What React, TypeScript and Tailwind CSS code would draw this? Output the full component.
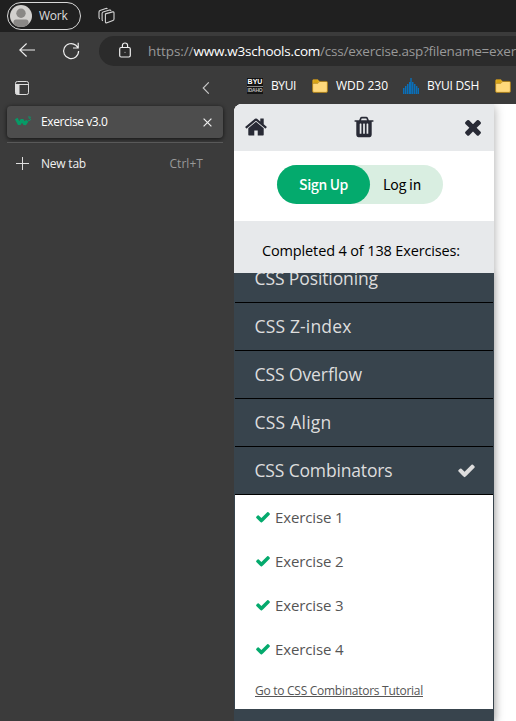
import { useLayoutEffect, useRef, useState } from "react";

const UI = "font-['Open_Sans','Noto_Sans',sans-serif]";

/** One line of text, tracked so that it fills the given width. */
function Fit({ w, className = "", children }: { w: number; className?: string; children: string }) {
  const ref = useRef<HTMLSpanElement>(null);
  const [tracking, setTracking] = useState(0);
  useLayoutEffect(() => {
    const el = ref.current;
    if (el) setTracking((w - el.getBoundingClientRect().width) / children.length);
  }, [w, children]);
  return (
    <span ref={ref} className={"inline-block shrink-0 whitespace-pre " + className} style={{ letterSpacing: tracking }}>
      {children}
    </span>
  );
}

const PATHS = {
  home: "M1472 992v480q0 26-19 45t-45 19h-384v-384h-256v384h-384q-26 0-45-19t-19-45v-480q0-1 .5-3t.5-3l575-474 575 474q1 2 1 6zm223-69l-62 74q-8 9-21 11h-3q-13 0-21-7l-692-577-692 577q-12 8-24 7-13-2-21-11l-62-74q-8-10-7-23.5t11-21.5l719-599q32-26 76-26t76 26l244 204v-195q0-14 9-23t23-9h192q14 0 23 9t9 23v408l219 182q10 8 11 21.5t-7 23.5z",
  trash: "M704 1376v-704q0-14-9-23t-23-9h-64q-14 0-23 9t-9 23v704q0 14 9 23t23 9h64q14 0 23-9t9-23zm256 0v-704q0-14-9-23t-23-9h-64q-14 0-23 9t-9 23v704q0 14 9 23t23 9h64q14 0 23-9t9-23zm256 0v-704q0-14-9-23t-23-9h-64q-14 0-23 9t-9 23v704q0 14 9 23t23 9h64q14 0 23-9t9-23zm-544-992h448l-48-117q-7-9-17-11h-317q-10 2-17 11zm928 32v64q0 14-9 23t-23 9h-96v948q0 83-47 143.500t-113 60.500h-832q-66 0-113-58.500t-47-141.500v-952h-96q-14 0-23-9t-9-23v-64q0-14 9-23t23-9h309l70-167q15-37 54-63t79-26h320q40 0 79 26t54 63l70 167h309q14 0 23 9t9 23z",
  close: "M1490 1322q0 40-28 68l-136 136q-28 28-68 28t-68-28l-294-294-294 294q-28 28-68 28t-68-28l-136-136q-28-28-28-68t28-68l294-294-294-294q-28-28-28-68t28-68l136-136q28-28 68-28t68 28l294 294 294-294q28-28 68-28t68 28l136 136q28 28 28 68t-28 68l-294 294 294 294q28 28 28 68z",
  check: "M1671 566q0 40-28 68l-724 724-136 136q-28 28-68 28t-68-28l-136-136-362-362q-28-28-28-68t28-68l136-136q28-28 68-28t68 28l294 295 656-657q28-28 68-28t68 28l136 136q28 28 28 68z",
};

function Glyph({ name, className }: { name: keyof typeof PATHS; className: string }) {
  return (
    <svg viewBox="0 0 1792 1792" fill="currentColor" className={"shrink-0 " + className}>
      <path d={PATHS[name]} />
    </svg>
  );
}

function Folder({ className = "" }: { className?: string }) {
  return (
    <svg viewBox="0 0 16 14" className={"h-3.5 w-4 shrink-0 " + className}>
      <path d="M.6 12.2V1.8Q.6.6 1.8.6h4L7.6 2.4h6.6q1.2 0 1.2 1.2v8.600q0 1.200-1.200 1.200H1.800Q.6 13.400.6 12.200z" fill="#ffd97b" stroke="#a77d1d" />
      <path d="M1.100 1.800q0-.7.7-.7h3.800L7 2.600 5.600 4H1.100z" fill="#d9a514" />
      <path d="M1 4.400h4.800L7.700 2.500" fill="none" stroke="#b98b20" strokeWidth=".8" />
    </svg>
  );
}

function TitleBar() {
  return (
    <div className="flex h-8 shrink-0 items-start bg-[#202020] pl-[7px] pt-0.5">
      <div className="flex h-7 w-[74px] items-center rounded-full border border-[#d8d8d8] pl-[2px]">
        <svg viewBox="0 0 22 22" className="size-[22px] shrink-0">
          <clipPath id="face"><circle cx="11" cy="11" r="11" /></clipPath>
          <g clipPath="url(#face)">
            <rect width="22" height="22" fill="#d2d0ce" />
            <circle cx="11" cy="8.300" r="4.700" fill="#8a8886" />
            <path d="M3.500 22v-5q0-2.500 2.500-2.500h10q2.500 0 2.500 2.500v5z" fill="#8a8886" />
          </g>
        </svg>
        <Fit w={28.5} className="ml-[7px] text-[12px] font-medium leading-4 text-[#ddd]">Work</Fit>
      </div>
      <svg viewBox="0 0 18 18" className="ml-[17px] mt-[5px] size-[18px]" fill="none" stroke="#d4d4d4" strokeWidth="1.100" strokeLinejoin="round">
        <path d="M7.400 6.900 14.600 4.900q1.400-.3 1.400 1v6q0 1.200-1.100 1.600L9 15.800q-1.600.4-1.600-1.100z" />
        <path d="M4.900 13.600q-.8-.2-.8-1.200V6.500q0-1 1-1.400l6.400-2q1.200-.3 1.500.8" />
        <path d="M2 11.700q-1-.2-1-1.400V5q0-1.200 1-1.600l5.800-1.900q1.200-.3 1.500.6" />
      </svg>
    </div>
  );
}

function Toolbar() {
  return (
    <div className="flex h-9 shrink-0 items-center overflow-hidden">
      <svg viewBox="0 0 16 14" className="ml-[19px] h-3.5 w-4 shrink-0" fill="none" stroke="#eee" strokeWidth="1.100">
        <path d="M16 7H.8M7.600.5.8 7l6.800 6.500" />
      </svg>
      <svg viewBox="0 0 18 18" className="ml-[27px] mt-[1px] size-[18px] shrink-0" fill="none" stroke="#eee" strokeWidth="1.200">
        <path d="M16.600 9a7.500 7.500 0 1 1-2.700-5.700L16 5.700M16.200.8v5.200h-5.200" />
      </svg>
      <div className="ml-[19px] mt-[2px] flex h-[30px] w-[417px] shrink-0 items-center rounded-l-full bg-[#2b2b2b] pl-5">
        <svg viewBox="0 0 12 16" className="mb-[2px] h-4 w-3 shrink-0" fill="none" stroke="#eee" strokeWidth="1.200">
          <rect x=".7" y="5.500" width="10.600" height="9.500" rx="1.400" />
          <path d="M3.400 5.500V3.600a2.600 2.600 0 0 1 5.200 0v1.900" />
          <circle cx="6" cy="10.300" r=".5" fill="#eee" stroke="none" />
        </svg>
        <div className="ml-[17px] flex text-[13.500px] leading-5 text-[#999]">
          <Fit w={45.5}>https://</Fit>
          <Fit w={126.5} className="text-white">www.w3schools.com</Fit>
          <Fit w={196}>/css/exercise.asp?filename=exer</Fit>
        </div>
      </div>
    </div>
  );
}

function Sidebar() {
  return (
    <aside className="flex w-[234px] shrink-0 flex-col pl-[7px] pr-[11px] text-[12px]">
      <div className="flex h-[38px] items-center justify-between pl-2 pr-[13px] pt-[2px]">
        <svg viewBox="0 0 14 14" className="size-3.5" fill="none" stroke="#ddd" strokeWidth="1">
          <rect x=".5" y=".5" width="13" height="13" rx="1.800" />
          <path d="M1 3.500h12.500" />
          <path d="M1 3.500h3v9.500H2q-1 0-1-1z" fill="#ddd" />
        </svg>
        <svg viewBox="0 0 8 12" className="h-3 w-2" fill="none" stroke="#c8c8c8" strokeWidth="1.100">
          <path d="M6.800.3 1.200 6l5.600 5.700" />
        </svg>
      </div>
      <div className="flex h-8 items-center rounded-[4px] bg-[#4d4d4d] pl-2 pr-[11px] shadow-[0_1px_4px_rgba(0,0,0,0.7)]">
        <svg viewBox="0 0 17 12" className="h-3 w-[17px] shrink-0" fill="none" stroke="#069a66">
          <path d="M1.200 2.500 4.300 8.300 7 3.800 9.700 8.300 12.200 4.600" strokeWidth="3" strokeLinejoin="bevel" />
          <path d="M13 1h2.500L14.300 2.500q1.500.1 1.300 1.300-.4 1.200-2.600.6" strokeWidth=".9" />
        </svg>
        <Fit w={66.5} className="ml-[9px] text-white">Exercise v3.0</Fit>
        <svg viewBox="0 0 9 9" className="ml-auto size-[9px]" stroke="#eee" strokeWidth="1.200">
          <path d="m.6.6 7.800 7.800M8.400.6.6 8.400" />
        </svg>
      </div>
      <div className="mt-1 h-px bg-[#595959]" />
      <div className="flex h-[41px] items-center pl-[9px] pr-[20px]">
        <svg viewBox="0 0 13 13" className="size-[13px]" stroke="#ddd" strokeWidth="1">
          <path d="M6.500 0v13M0 6.500h13" />
        </svg>
        <Fit w={45} className="ml-3 text-[#f0f0f0]">New tab</Fit>
        <Fit w={33.500} className="ml-auto text-[#999]">Ctrl+T</Fit>
      </div>
    </aside>
  );
}

function Bookmarks() {
  return (
    <div className="flex h-9 shrink-0 items-center overflow-hidden pl-[13px] text-[12px] text-white">
      <div className="flex h-4 w-4 shrink-0 flex-col items-center overflow-hidden bg-[#151515]">
        <Fit w={15} className="h-[8px] font-['Liberation_Sans',sans-serif] text-[7px] font-bold leading-[8px]">BYU</Fit>
        <div className="h-px w-full bg-[#888]" />
        <Fit w={15} className="h-[7px] font-['Liberation_Sans',sans-serif] text-[5px] font-bold leading-[7px] text-[#bbb]">IDAHO</Fit>
      </div>
      <Fit w={25} className="ml-2">BYUI</Fit>
      <Folder className="ml-[16px]" />
      <Fit w={52} className="ml-2">WDD 230</Fit>
      <svg viewBox="0 0 16 16" className="ml-[15px] size-4 shrink-0" fill="#0a6fb8">
        <path d="M0 10h1.500v6H0zM2 8h1.500v8H2zM4 6h1.500v10H4zM6 4h1.500v12H6zM7.300 0h1.400v16H7.300zM9 4h1.500v12H9zM11 6h1.500v10H11zM13 8h1.400v8H13zM14.800 10H16v6h-1.200z" />
      </svg>
      <Fit w={52} className="ml-2">BYUI DSH</Fit>
      <Folder className="ml-[16px]" />
    </div>
  );
}

const TOPICS = [
  { title: "CSS Positioning", w: 123.5 },
  { title: "CSS Z-index", w: 97 },
  { title: "CSS Overflow", w: 107.5 },
  { title: "CSS Align", w: 77 },
  { title: "CSS Combinators", w: 138, done: true },
];

function Page() {
  return (
    <main className="flex min-h-0 flex-1 overflow-hidden rounded-tl-[8px] bg-white">
      <div className="flex w-[260px] shrink-0 flex-col bg-white shadow-[0_2px_10px_rgba(0,0,0,0.35)]">
        <header className="flex h-[47px] shrink-0 items-center bg-[#e7e9eb] pb-[1px] pl-[10px] text-[#282a35]">
          <Glyph name="home" className="size-6" />
          <Glyph name="trash" className="ml-[84px] size-6" />
          <Glyph name="close" className="ml-[85px] size-6" />
        </header>
        <div className="flex h-[70px] shrink-0 justify-center pr-[8px] pt-[14px] font-['Noto_Sans_CJK_SC',sans-serif] text-[14px]">
          <div className="flex h-[39px] w-[166px] rounded-full bg-[#d9eee1]">
            <div className="flex w-[93px] items-center justify-center rounded-full bg-[#04aa6d] font-medium text-white">
              <Fit w={49}>Sign Up</Fit>
            </div>
            <div className="flex items-center pl-[13px] text-black">
              <Fit w={38}>Log in</Fit>
            </div>
          </div>
        </div>
        <div className="z-10 flex h-[52px] shrink-0 items-center bg-[#e7e9eb] pl-[28px] pt-[8px] text-[14.500px] text-black">
          <Fit w={198}>Completed 4 of 138 Exercises:</Fit>
        </div>
        <div className="flex min-h-0 flex-1 flex-col overflow-hidden bg-[#38444d] px-px shadow-[0_1px_8px_rgba(0,0,0,0.15)]">
          <div className="-mt-[18px]">
            {TOPICS.map((t) => (
              <div key={t.title} className="flex h-12 items-center justify-between border-b border-black pl-[19.500px] pr-[17px] text-[17.500px] text-[#ddd]">
                <Fit w={t.w}>{t.title}</Fit>
                {t.done && <Glyph name="check" className="size-[19px]" />}
              </div>
            ))}
          </div>
          <div className="h-[214px] bg-white pl-5 text-[#555]">
            {[1, 2, 3, 4].map((n) => (
              <div key={n} className="flex h-11 items-center text-[15px]">
                <Glyph name="check" className="size-4 text-[#04aa6d]" />
                <Fit w={68.500} className="ml-[4px]">{"Exercise " + n}</Fit>
              </div>
            ))}
            <div className="flex h-[38px] items-center pt-[1px] text-[12px]">
              <Fit w={168} className="underline">Go to CSS Combinators Tutorial</Fit>
            </div>
          </div>
        </div>
      </div>
    </main>
  );
}

export default function App() {
  return (
    <div className={"flex h-[721px] w-[516px] flex-col overflow-hidden bg-[#3b3b3b] " + UI}>
      <TitleBar />
      <Toolbar />
      <div className="flex min-h-0 flex-1">
        <Sidebar />
        <div className="flex min-w-0 flex-1 flex-col">
          <Bookmarks />
          <Page />
        </div>
      </div>
    </div>
  );
}
